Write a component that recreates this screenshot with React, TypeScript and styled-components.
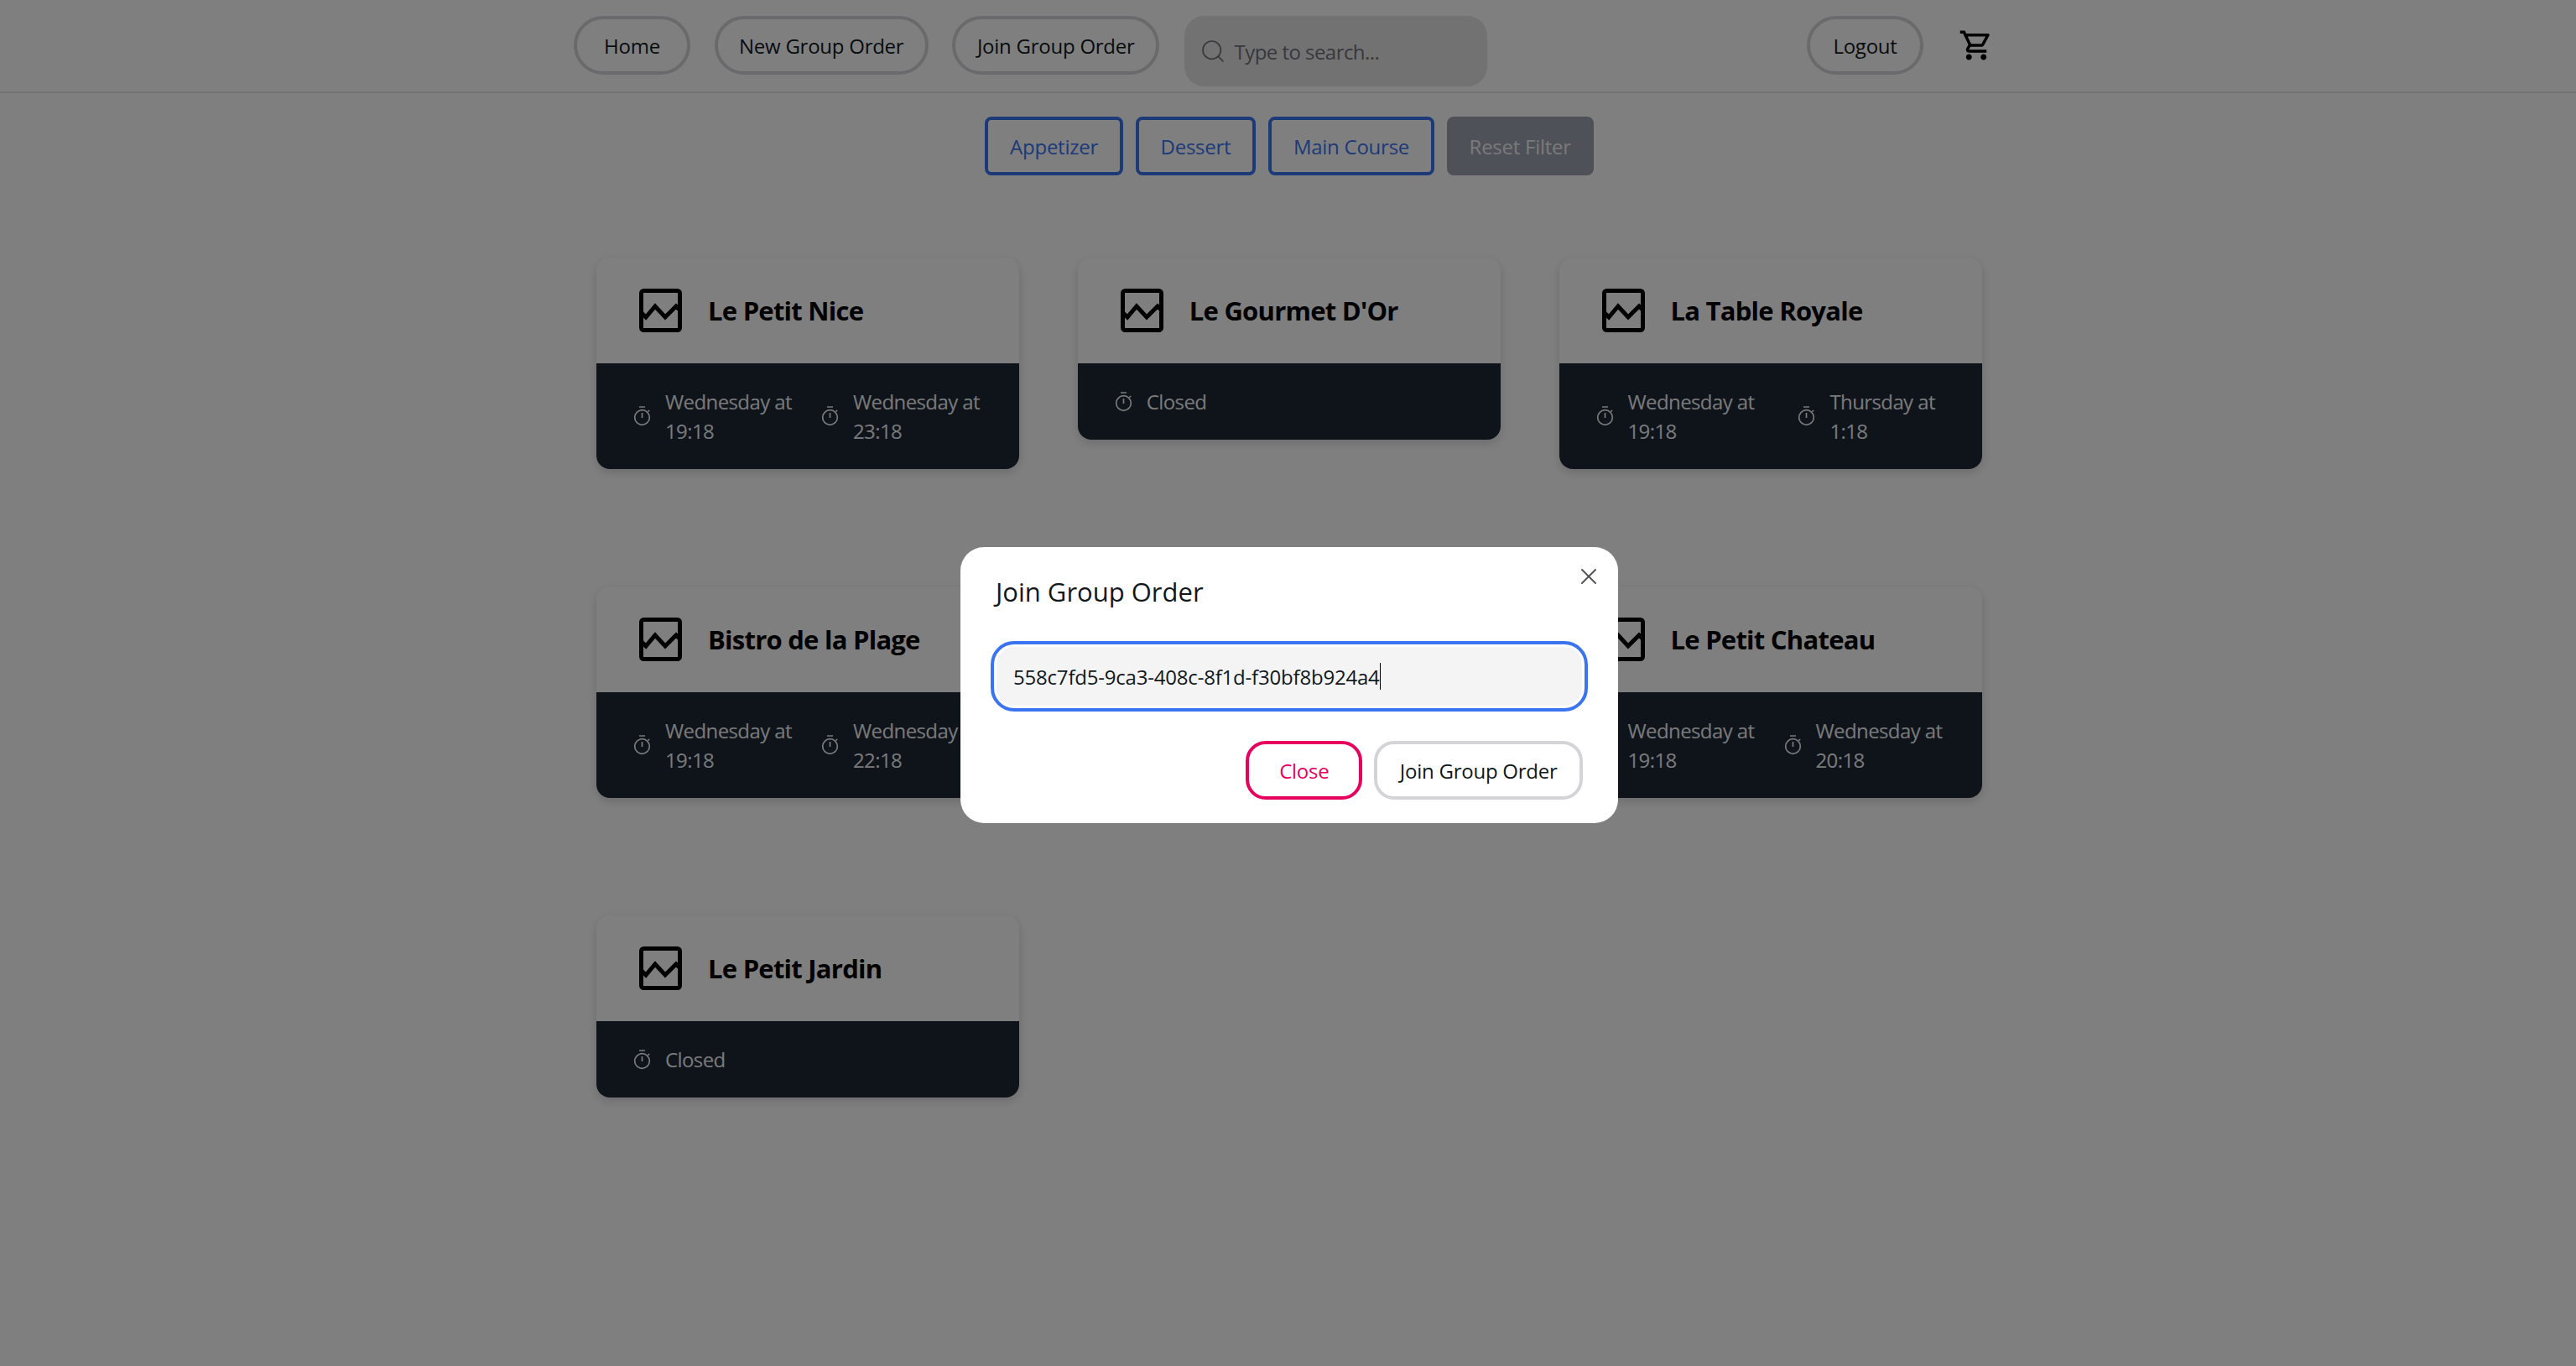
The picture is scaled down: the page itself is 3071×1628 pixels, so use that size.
import { createGlobalStyle, styled } from 'styled-components';
import { Search, X } from 'lucide-react';
import { MdOutlineShoppingCart } from 'react-icons/md';

const GlobalStyle = createGlobalStyle`
  html, body { margin: 0; padding: 0; background: #fff; }
  * { box-sizing: border-box; }
  body { font-family: "Open Sans", "Noto Sans", sans-serif; color: #11181c; }
`;

const Page = styled.div`
  min-height: 1628px;
  background: #fff;
`;

const Navbar = styled.nav`
  height: 111px;
  border-bottom: 2px solid #e5e7eb;
  padding: 19px 694px 0 684px;
  display: flex;
  align-items: flex-start;
`;

const NavGroup = styled.div`
  display: flex;
  align-items: flex-start;
  gap: 28.5px;
`;

const NavButton = styled.button`
  height: 70px;
  min-width: 139px;
  padding: 0 25.5px;
  border: 4px solid #d4d4d8;
  border-radius: 35px;
  background: transparent;
  color: #11181c;
  font: 400 24px "Open Sans", sans-serif;
  letter-spacing: -0.25px;
`;

const SearchBox = styled.div`
  width: 361px;
  height: 84px;
  margin-left: 1px;
  padding: 0 18px;
  display: flex;
  align-items: center;
  gap: 10px;
  border-radius: 24px;
  background: #e4e4e7;
  color: #71717a;
  font-size: 24px;
  letter-spacing: -0.55px;
`;

const RightGroup = styled.div`
  margin-left: auto;
  display: flex;
  align-items: center;
  height: 70px;
  gap: 42px;
`;

const CartIcon = styled(MdOutlineShoppingCart)`
  color: #000;
  width: 42px;
  height: 42px;
`;

const FilterBar = styled.div`
  margin-top: 28px;
  display: flex;
  justify-content: center;
  gap: 14.5px;
  padding-left: 3px;
`;

const FilterButton = styled.button<{ $reset?: boolean }>`
  height: 70px;
  padding: 0 ${({ $reset }) => ($reset ? 23 : 26)}px;
  border-radius: 8px;
  border: 4px solid ${({ $reset }) => ($reset ? '#9ca3af' : '#3b74f0')};
  background: ${({ $reset }) => ($reset ? '#9ca3af' : 'transparent')};
  color: ${({ $reset }) => ($reset ? '#f3f4f6' : '#3b74f0')};
  font: 400 24px "Open Sans", sans-serif;
  letter-spacing: -0.25px;
`;

const CardGrid = styled.div`
  margin: 98px 0 0 711px;
  width: 1653px;
  display: grid;
  grid-template-columns: repeat(3, 504px);
  grid-auto-rows: 252px;
  column-gap: 69.75px;
  row-gap: 140px;
  align-items: start;
`;

const Card = styled.article`
  border-radius: 16px;
  overflow: hidden;
  background: #fff;
  box-shadow: 0 4px 12px rgba(0, 0, 0, 0.16);
`;

const CardHeader = styled.header`
  height: 126px;
  padding-left: 49px;
  display: flex;
  align-items: center;
  gap: 30px;
`;

const CardTitle = styled.h2`
  margin: 0;
  color: #000;
  font: 700 31px "Open Sans", sans-serif;
  letter-spacing: -0.75px;
`;

const CardFooter = styled.div`
  background: #1f2937;
  padding: 28px 32px 28px 40px;
  display: flex;
  align-items: center;
  gap: 16px;
`;

const Hours = styled.div`
  display: flex;
  align-items: center;
  gap: 14px;
  color: #f3f4f6;
  font-size: 24px;
  line-height: 35px;
  letter-spacing: -0.6px;
`;

const StopwatchSvg = styled.svg`
  flex: none;
  width: 28px;
  height: 28px;
`;

const Overlay = styled.div`
  position: fixed;
  inset: 0;
  padding: 5px 0 0 3px;
  background: rgba(0, 0, 0, 0.5);
  display: flex;
  align-items: center;
  justify-content: center;
`;

const Modal = styled.section`
  position: relative;
  width: 784px;
  height: 329px;
  padding: 32px 36px 0;
  background: #fff;
  border-radius: 28px;
`;

const ModalTitle = styled.h3`
  margin: 0 0 38px 6px;
  font: 500 31px/42px "Open Sans", sans-serif;
  color: #11181c;
`;

const CodeInput = styled.div`
  height: 84px;
  padding-left: 23px;
  display: flex;
  align-items: center;
  background: #f4f4f5;
  border-radius: 28px;
  border: 4px solid #3b74f0;
  box-shadow: inset 0 0 0 3px #fff;
  font-size: 24px;
  letter-spacing: -0.2px;
`;

const Caret = styled.span`
  width: 1px;
  height: 32px;
  background: #000;
`;

const ModalActions = styled.div`
  margin-top: 35px;
  padding-right: 6px;
  display: flex;
  justify-content: flex-end;
  gap: 14px;
`;

const ModalButton = styled.button<{ $danger?: boolean }>`
  height: 70px;
  min-width: 139px;
  padding: 0 26.5px;
  border-radius: 24px;
  border: 4px solid ${({ $danger }) => ($danger ? '#e8005f' : '#d4d4d8')};
  background: #fff;
  color: ${({ $danger }) => ($danger ? '#e8005f' : '#11181c')};
  font: 400 24px "Open Sans", sans-serif;
  letter-spacing: -0.25px;
`;

const CloseIcon = styled(X)`
  position: absolute;
  top: 19px;
  right: 19px;
  width: 32px;
  height: 32px;
  color: #52525b;
`;

function PictureIcon() {
  return (
    <svg width="54" height="54" viewBox="0 0 54 54" fill="none" stroke="#000" strokeWidth="5">
      <rect x="4.5" y="3.5" width="46" height="47" rx="3" />
      <path d="M4 29 L10 35 L21 22 L33 35 L46 22 L51 27" />
    </svg>
  );
}

function StopwatchIcon() {
  return (
    <StopwatchSvg viewBox="0 0 28 28" fill="none" stroke="currentColor" strokeWidth="1.7">
      <circle cx="14.5" cy="15.5" r="8.8" />
      <path d="M11 3h7M14.5 10v6M21.5 8.6l1.6-1.6" />
    </StopwatchSvg>
  );
}

type Restaurant = { name: string; hours: string[] };

// the fifth card sits fully behind the modal, so its text can't be read
const restaurants: Restaurant[] = [
  { name: 'Le Petit Nice', hours: ['Wednesday at 19:18', 'Wednesday at 23:18'] },
  { name: "Le Gourmet D'Or", hours: ['Closed'] },
  { name: 'La Table Royale', hours: ['Wednesday at 19:18', 'Thursday at 1:18'] },
  { name: 'Bistro de la Plage', hours: ['Wednesday at 19:18', 'Wednesday at 22:18'] },
  { name: '', hours: [] },
  { name: 'Le Petit Chateau', hours: ['Wednesday at 19:18', 'Wednesday at 20:18'] },
  { name: 'Le Petit Jardin', hours: ['Closed'] },
];

export default function App() {
  return (
    <Page>
      <GlobalStyle />
      <Navbar>
        <NavGroup>
          <NavButton>Home</NavButton>
          <NavButton>New Group Order</NavButton>
          <NavButton>Join Group Order</NavButton>
          <SearchBox>
            <Search size={32} strokeWidth={1.3} />
            Type to search...
          </SearchBox>
        </NavGroup>
        <RightGroup>
          <NavButton>Logout</NavButton>
          <CartIcon />
        </RightGroup>
      </Navbar>
      <FilterBar>
        <FilterButton>Appetizer</FilterButton>
        <FilterButton>Dessert</FilterButton>
        <FilterButton>Main Course</FilterButton>
        <FilterButton $reset>Reset Filter</FilterButton>
      </FilterBar>
      <CardGrid>
        {restaurants.map((r) => (
          <Card key={r.name}>
            <CardHeader>
              <PictureIcon />
              <CardTitle>{r.name}</CardTitle>
            </CardHeader>
            <CardFooter>
              {r.hours.map((h) => (
                <Hours key={h}>
                  <StopwatchIcon />
                  <span>{h}</span>
                </Hours>
              ))}
            </CardFooter>
          </Card>
        ))}
      </CardGrid>
      <Overlay>
        <Modal>
          <CloseIcon strokeWidth={1.5} />
          <ModalTitle>Join Group Order</ModalTitle>
          <CodeInput>
            558c7fd5-9ca3-408c-8f1d-f30bf8b924a4
            <Caret />
          </CodeInput>
          <ModalActions>
            <ModalButton $danger>Close</ModalButton>
            <ModalButton>Join Group Order</ModalButton>
          </ModalActions>
        </Modal>
      </Overlay>
    </Page>
  );
}
